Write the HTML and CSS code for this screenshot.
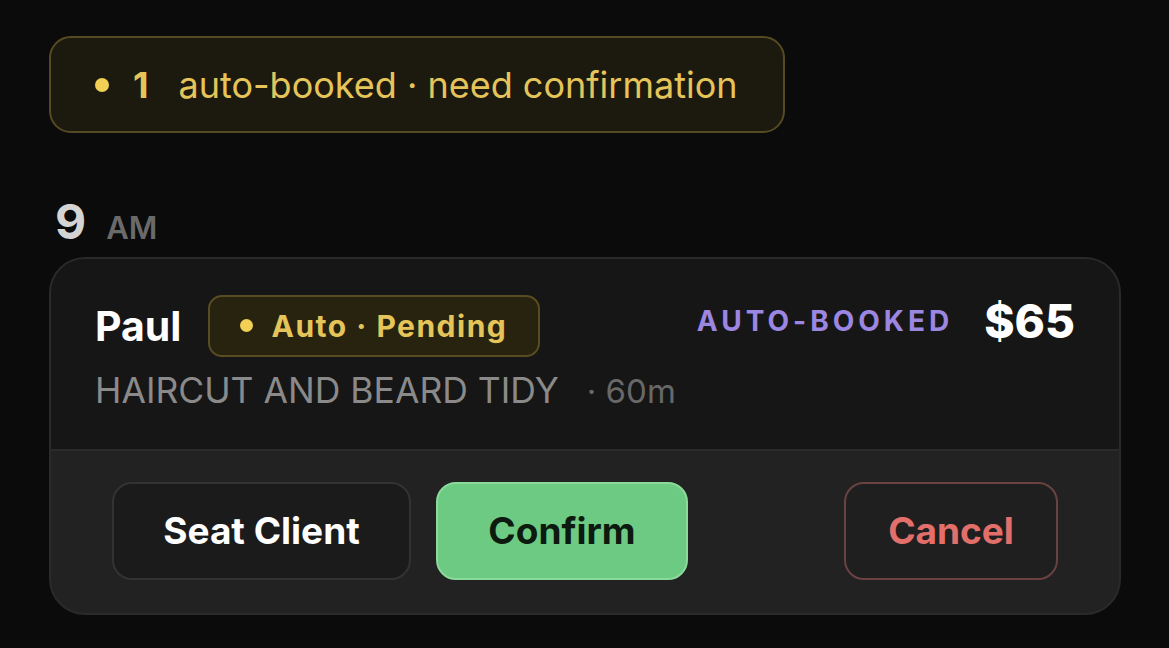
FILE: index.html
```html
<!DOCTYPE html>
<html lang="en">
<head>
    <meta charset="UTF-8">
    <meta name="viewport" content="width=device-width, initial-scale=1.0">
    <title>Schedule</title>
    <link rel="stylesheet" href="styles.css">
</head>
<body>
    <div class="page">
        <div class="banner">
            <span class="dot"></span>
            <span class="banner-count">1</span>
            <span class="banner-text">auto-booked · need confirmation</span>
        </div>

        <div class="hour">
            <span class="hour-num">9</span>
            <span class="hour-ampm">AM</span>
        </div>

        <div class="card">
            <div class="card-top">
                <div class="row">
                    <div class="who">
                        <span class="name">Paul</span>
                        <span class="pill"><span class="pill-dot"></span>Auto · Pending</span>
                    </div>
                    <div class="meta">
                        <span class="tag">AUTO-BOOKED</span>
                        <span class="price">$65</span>
                    </div>
                </div>
                <div class="service">
                    <span class="service-name">HAIRCUT AND BEARD TIDY</span>
                    <span class="duration">· 60m</span>
                </div>
            </div>
            <div class="card-actions">
                <button class="btn btn-seat">Seat Client</button>
                <button class="btn btn-confirm">Confirm</button>
                <button class="btn btn-cancel">Cancel</button>
            </div>
        </div>
    </div>
</body>
</html>
```

FILE: styles.css
```css
* {
    box-sizing: border-box;
}
body {
    margin: 0;
    background-color: #0b0b0b;
    font-family: Inter, "Noto Sans", sans-serif;
    color: #fff;
}
.page {
    padding: 36px 0 0 49px;
}
.banner {
    display: inline-flex;
    align-items: center;
    height: 97px;
    padding: 0 45px 0 44px;
    border: 2px solid #564a22;
    border-radius: 22px;
    background-color: #1c1a0f;
    color: #e5c55a;
    font-size: 36px;
}
.dot {
    width: 14px;
    height: 14px;
    border-radius: 50%;
    background-color: #f2cf55;
    margin-right: 24px;
}
.banner-count {
    font-weight: 700;
    margin-right: 30px;
}
.banner-text {
    font-weight: 400;
}

.hour {
    display: flex;
    align-items: baseline;
    margin: 60px 0 6px 6px;
    line-height: 1.2;
}
.hour-num {
    font-size: 48px;
    font-weight: 700;
    color: #d4d4d4;
    margin-right: 20px;
}
.hour-ampm {
    font-size: 31px;
    font-weight: 600;
    color: #6a6a6a;
}

.card {
    width: 1072px;
    border: 2px solid #2a2a2a;
    border-radius: 36px;
    overflow: hidden;
    background-color: #222222;
}
.card-top {
    background-color: #161616;
    padding: 36px 44px 0 44px;
    height: 192px;
    border-bottom: 2px solid #2a2a2a;
}
.row {
    display: flex;
    align-items: center;
    justify-content: space-between;
}
.who {
    display: flex;
    align-items: center;
}
.name {
    font-size: 41px;
    font-weight: 700;
    margin-right: 27px;
}
.pill {
    display: inline-flex;
    align-items: center;
    height: 62px;
    padding: 0 31px 0 30px;
    border: 2px solid #5a4c22;
    border-radius: 14px;
    background-color: #27230f;
    color: #e5c55a;
    font-size: 30px;
    font-weight: 700;
    letter-spacing: 1.5px;
}
.pill-dot {
    width: 13px;
    height: 13px;
    border-radius: 50%;
    background-color: #f2cf55;
    margin-right: 18px;
}
.meta {
    display: flex;
    align-items: center;
    margin-top: -10px;
}
.tag {
    font-size: 28px;
    font-weight: 700;
    letter-spacing: 4px;
    color: #9b86e2;
    margin-right: 31px;
}
.price {
    font-size: 46px;
    font-weight: 800;
}
.service {
    margin-top: 12px;
    display: flex;
    align-items: baseline;
}
.service-name {
    font-size: 35.5px;
    font-weight: 400;
    color: #8a8a8a;
    margin-right: 28px;
}
.duration {
    font-size: 33px;
    color: #686868;
}

.card-actions {
    display: flex;
    align-items: center;
    padding: 31px 61px 33px 61px;
}
.btn {
    height: 98px;
    border-radius: 20px;
    font-family: Inter, "Noto Sans", sans-serif;
    font-size: 37px;
    font-weight: 700;
}
.btn-seat {
    width: 299px;
    background-color: #1b1b1b;
    border: 2px solid #333333;
    color: #fff;
}
.btn-confirm {
    width: 252px;
    margin-left: 25px;
    background-color: #6dca82;
    border: 2px solid #8adb9b;
    color: #0c1a0f;
}
.btn-cancel {
    width: 214px;
    margin-left: auto;
    background-color: #1f1f1f;
    border: 2px solid #6a4242;
    color: #e36f6b;
}
```
